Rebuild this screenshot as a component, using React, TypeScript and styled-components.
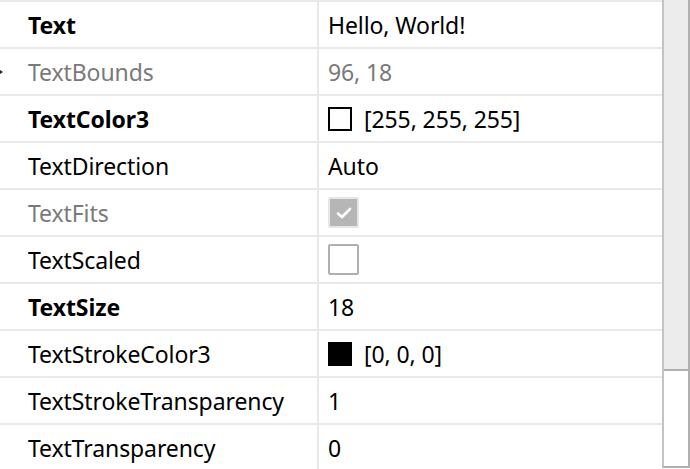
import React from "react";
import styled, { createGlobalStyle } from "styled-components";

const Global = createGlobalStyle`
  html, body { margin: 0; padding: 0; background: #fff; overflow: hidden; }
  body { font-family: "Noto Sans", "Open Sans", sans-serif; }
`;

const Frame = styled.div`
  display: flex;
  width: 690px;
  height: 469px;
  overflow: hidden;
`;

const Table = styled.div`
  flex: 0 0 662px;
  display: flex;
  flex-direction: column;
  border-top: 2px solid #e9e9e9;
`;

const Row = styled.div`
  display: grid;
  grid-template-columns: 319px 1fr;
  height: 45px;
  border-bottom: 2px solid #e9e9e9;
  flex: 0 0 auto;
  position: relative;
`;

const NameCell = styled.div<{ $bold?: boolean; $dim?: boolean }>`
  display: flex;
  align-items: center;
  padding-left: 28px;
  border-right: 2px solid #e9e9e9;
  font-size: 23px;
  letter-spacing: -0.1px;
  font-weight: ${(p) => (p.$bold ? 700 : 400)};
  color: ${(p) => (p.$dim ? "#7a7a7a" : "#000")};
  white-space: nowrap;
`;

const ValueCell = styled.div<{ $dim?: boolean }>`
  display: flex;
  align-items: center;
  gap: 12px;
  padding-left: 9px;
  font-size: 23px;
  letter-spacing: -0.1px;
  color: ${(p) => (p.$dim ? "#7a7a7a" : "#000")};
  white-space: nowrap;
`;

const Swatch = styled.span<{ $color: string }>`
  box-sizing: border-box;
  width: 24px;
  height: 24px;
  background: ${(p) => p.$color};
  border: 2px solid #000;
`;

const Check = styled.span<{ $checked?: boolean }>`
  box-sizing: border-box;
  width: 31px;
  height: 31px;
  display: flex;
  align-items: center;
  justify-content: center;
  border-radius: 2px;
  background: ${(p) => (p.$checked ? "#b6b6b6" : "#fff")};
  border: 2px solid ${(p) => (p.$checked ? "#e6e6e6" : "#b0b0b0")};
`;

const Arrow = styled.span`
  position: absolute;
  left: -3px;
  top: 50%;
  margin-top: -4px;
  width: 0;
  height: 0;
  border-top: 4px solid transparent;
  border-bottom: 4px solid transparent;
  border-left: 6px solid #222;
`;

const Scrollbar = styled.div`
  flex: 0 0 28px;
  box-sizing: border-box;
  display: flex;
  flex-direction: column;
  border-left: 2px solid #c4c4c4;
  border-right: 2px solid #b0b0b0;
  border-bottom: 2px solid #b0b0b0;
  height: 468px;
`;

const Thumb = styled.div`
  height: 371px;
  background: #ececec;
  border-bottom: 2px solid #b0b0b0;
  box-sizing: border-box;
`;

const Track = styled.div`
  flex: 1;
  background: #fff;
`;

type Prop = {
  name: string;
  bold?: boolean;
  dim?: boolean;
  arrow?: boolean;
  value?: string;
  swatch?: string;
  check?: "on" | "off";
};

const props: Prop[] = [
  { name: "Text", bold: true, value: "Hello, World!" },
  { name: "TextBounds", dim: true, arrow: true, value: "96, 18" },
  { name: "TextColor3", bold: true, swatch: "#fff", value: "[255, 255, 255]" },
  { name: "TextDirection", value: "Auto" },
  { name: "TextFits", dim: true, check: "on" },
  { name: "TextScaled", check: "off" },
  { name: "TextSize", bold: true, value: "18" },
  { name: "TextStrokeColor3", swatch: "#000", value: "[0, 0, 0]" },
  { name: "TextStrokeTransparency", value: "1" },
  { name: "TextTransparency", value: "0" },
];

export default function App() {
  return (
    <>
      <Global />
      <Frame>
        <Table>
          {props.map((p) => (
            <Row key={p.name}>
              {p.arrow && <Arrow />}
              <NameCell $bold={p.bold} $dim={p.dim}>
                {p.name}
              </NameCell>
              <ValueCell $dim={p.dim}>
                {p.swatch && <Swatch $color={p.swatch} />}
                {p.check && (
                  <Check $checked={p.check === "on"}>
                    {p.check === "on" && (
                      <svg width="18" height="14" viewBox="0 0 18 14">
                        <path
                          d="M3 7.5 L7 11 L15 3"
                          fill="none"
                          stroke="#fff"
                          strokeWidth="2.6"
                          strokeLinecap="round"
                          strokeLinejoin="round"
                        />
                      </svg>
                    )}
                  </Check>
                )}
                {p.value && <span>{p.value}</span>}
              </ValueCell>
            </Row>
          ))}
        </Table>
        <Scrollbar>
          <Thumb />
          <Track />
        </Scrollbar>
      </Frame>
    </>
  );
}
